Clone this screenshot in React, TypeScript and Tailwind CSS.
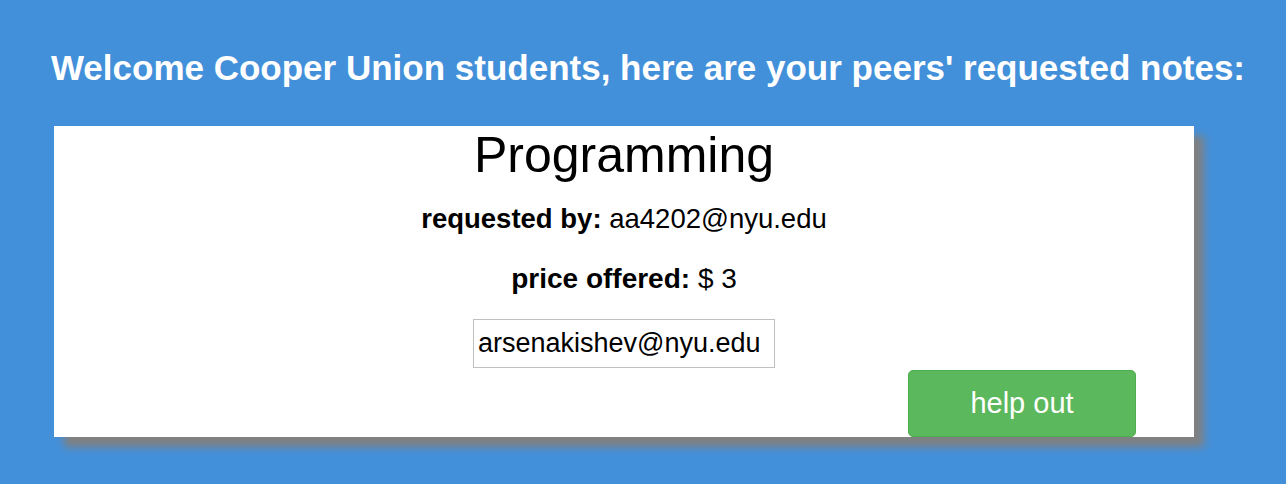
export default function App() {
  return (
    <div className="min-h-[484px] w-full bg-[#4390da] font-['Liberation_Sans',Arial,sans-serif] flex flex-col pt-[48px]">
      <h2 className="pl-[10px] text-white font-bold text-[35px] leading-[40px] text-center whitespace-nowrap">
        Welcome Cooper Union students, here are your peers' requested notes:
      </h2>

      <div className="ml-[54px] mt-[38px] w-[1140px] h-[311px] bg-white shadow-[10px_10px_8px_#808080] flex flex-col items-center text-black">
        <h1 className="mt-[2px] text-[50px] leading-[55px]">Programming</h1>
        <p className="mt-[20px] text-[27.5px] leading-[31px]">
          <span className="font-bold">requested by:</span> aa4202@nyu.edu
        </p>
        <p className="mt-[29px] text-[28px] leading-[31px]">
          <span className="font-bold">price offered:</span> $ 3
        </p>
        <input
          className="mt-[25px] w-[302px] h-[49px] border border-[#c0c0c0] px-[4px] text-[27px] text-black outline-none"
          defaultValue="arsenakishev@nyu.edu"
        />
        <div className="w-full flex justify-end pr-[58px] mt-[2px]">
          <button className="w-[228px] h-[67px] rounded-[5px] bg-[#5cb85c] border border-[#4cae4c] text-white text-[29px]">
            help out
          </button>
        </div>
      </div>
    </div>
  );
}
